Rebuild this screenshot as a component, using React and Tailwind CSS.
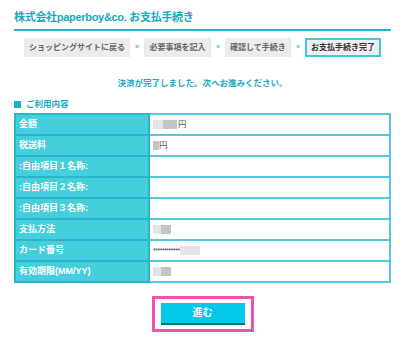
import React from "react";

const steps = [
  { text: "ショッピングサイトに戻る", w: "w-[106px]" },
  { text: "必要事項を記入", w: "w-[67px]" },
  { text: "確認して手続き", w: "w-[66px]" },
  { text: "お支払手続き完了", w: "w-[76px]" },
];

const Blur = ({ w, dark }) => (
  <span
    className={`inline-block h-[9px] align-middle blur-[0.6px] ${dark ? "bg-[#c4c4c4]" : "bg-[#e4e4e4]"}`}
    style={{ width: w }}
  />
);

const rows = [
  {
    label: "金額",
    value: (
      <>
        <Blur w={10} />
        <Blur w={14} dark />
        <span className="ml-[1px]">円</span>
      </>
    ),
  },
  {
    label: "税送料",
    value: (
      <>
        <Blur w={6} dark />
        <span>円</span>
      </>
    ),
  },
  { label: ":自由項目１名称:", value: null },
  { label: ":自由項目２名称:", value: null },
  { label: ":自由項目３名称:", value: null },
  {
    label: "支払方法",
    value: (
      <>
        <Blur w={8} />
        <Blur w={10} dark />
      </>
    ),
  },
  {
    label: "カード番号",
    value: (
      <>
        <span className="text-[7px] tracking-[-0.5px] text-[#444]">************</span>
        <Blur w={20} />
      </>
    ),
  },
  {
    label: "有効期限(MM/YY)",
    value: (
      <>
        <Blur w={8} />
        <Blur w={10} dark />
      </>
    ),
  },
];

export default function App() {
  return (
    <div className="w-[405px] h-[343px] bg-white px-[14px] pt-[10px] font-['Liberation_Sans','Noto_Sans_CJK_JP',sans-serif]">
      <h1 className="h-[21px] text-[11px] leading-[14px] font-bold text-[#17a9c1] border-b-2 border-[#22b2c7] tracking-[-0.3px] whitespace-nowrap">
        株式会社paperboy&amp;co. お支払手続き
      </h1>

      <div className="flex justify-center items-center mt-[7px]">
        {steps.map((s, i) => (
          <React.Fragment key={s.text}>
            {i > 0 && <span className="w-[14px] text-center text-[7px] font-bold text-[#3ec6da]">»</span>}
            {i === steps.length - 1 ? (
              <div className={`${s.w} h-[19px] flex items-center justify-center whitespace-nowrap bg-[#f0f0f0] border-2 border-[#42c8dc] text-[8px] font-bold text-[#333]`}>
                {s.text}
              </div>
            ) : (
              <div className={`${s.w} h-[19px] flex items-center justify-center whitespace-nowrap bg-[#ececec] text-[8px] font-bold text-[#666]`}>
                {s.text}
              </div>
            )}
          </React.Fragment>
        ))}
      </div>

      <p className="mt-[19px] text-center text-[8.5px] leading-[14px] font-bold text-[#1aa9c2]">
        決済が完了しました。次へお進みください。
      </p>

      <h2 className="mt-[7px] flex items-center gap-[5px] text-[8.5px] leading-[14px] font-bold text-[#1aa9c2]">
        <span className="w-[7px] h-[7px] bg-[#17b3c9]" />
        ご利用内容
      </h2>

      <table className="mt-[2px] w-full border-collapse">
        <tbody>
          {rows.map((r) => (
            <tr key={r.label} className="h-[21px]">
              <td className="w-[134px] bg-[#45cedb] border-2 border-[#2cb5c9] px-[3px] text-[9px] font-bold text-white whitespace-nowrap">
                {r.label}
              </td>
              <td className="border-2 border-[#52c9dd] px-[3px] text-[8.5px] text-[#555]">{r.value}</td>
            </tr>
          ))}
        </tbody>
      </table>

      <div className="flex justify-center mt-[13px]">
        <div className="border-[3px] border-[#f252ab] px-[6px] py-[4px] leading-none">
          <button className="block w-[84px] h-[22px] bg-[#03c8e8] border-b-2 border-[#00707f] text-white text-[10px] font-bold">
            進む
          </button>
        </div>
      </div>
    </div>
  );
}
